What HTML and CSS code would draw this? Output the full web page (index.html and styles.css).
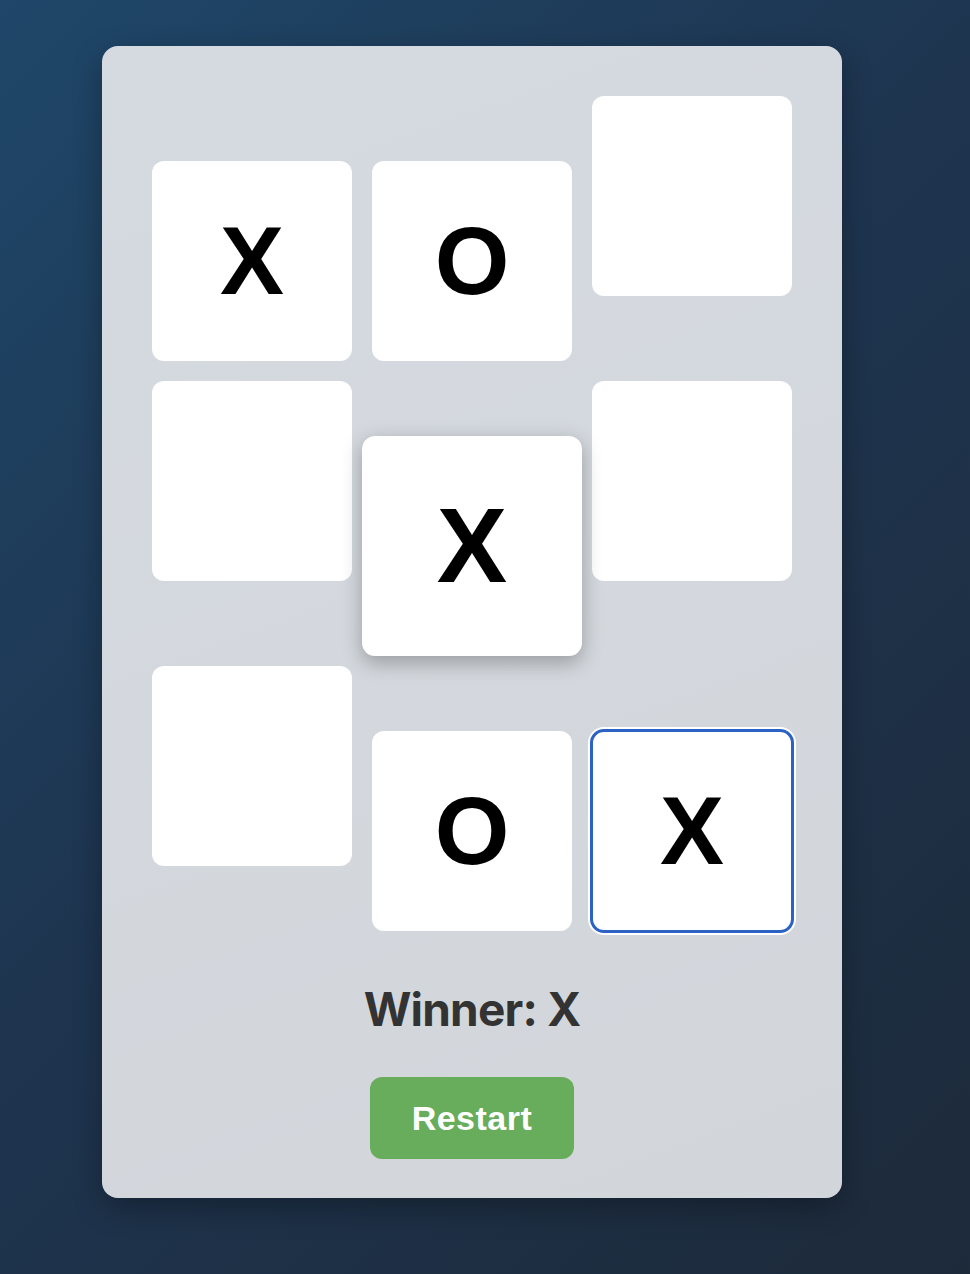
FILE: index.html
```html
<!DOCTYPE html>
<html lang="en">
<head>
<meta charset="utf-8">
<title>Tic Tac Toe</title>
<link rel="stylesheet" href="styles.css">
</head>
<body>
<main class="card">
  <div class="board">
    <div class="cell drop">X</div>
    <div class="cell drop">O</div>
    <div class="cell"></div>
    <div class="cell"></div>
    <div class="cell drop raised">X</div>
    <div class="cell"></div>
    <div class="cell"></div>
    <div class="cell drop">O</div>
    <div class="cell drop selected">X</div>
  </div>
  <h2 class="status">Winner: X</h2>
  <button class="restart">Restart</button>
</main>
</body>
</html>
```
FILE: styles.css
```css
html, body {
  margin: 0;
  height: 100%;
}
body {
  background: linear-gradient(135deg, #1f4769 0%, #1e3550 45%, #1d2a3a 100%);
  padding: 46px 0 0 102px;
  box-sizing: border-box;
  font-family: Inter, "Liberation Sans", sans-serif;
}
.card {
  width: 740px;
  box-sizing: border-box;
  padding: 50px 50px 39px;
  background: linear-gradient(160deg, #d5dae0 0%, #d2d6db 100%);
  border-radius: 16px;
  box-shadow: 0 10px 30px rgba(0, 0, 0, 0.3);
  display: flex;
  flex-direction: column;
  align-items: center;
}
.board {
  display: grid;
  grid-template-columns: repeat(3, 200px);
  column-gap: 20px;
  row-gap: 20px;
  align-items: start;
}
.cell {
  width: 200px;
  height: 200px;
  background: #fff;
  border-radius: 12px;
  display: flex;
  align-items: center;
  justify-content: center;
  font-family: "Liberation Sans", Arial, sans-serif;
  font-weight: 700;
  font-size: 96px;
  color: #000;
}
.drop {
  margin-top: 65px;
}
.raised {
  transform: scale(1.1);
  box-shadow: 0 6px 18px rgba(0, 0, 0, 0.28);
}
.selected {
  outline: 3px solid #2b62c4;
  outline-offset: -1px;
  box-shadow: 0 0 0 4px #fff;
}
.status {
  margin: 49px 0 0;
  font-family: Inter, "Liberation Sans", sans-serif;
  font-weight: 700;
  font-size: 46px;
  letter-spacing: -0.8px;
  line-height: 58px;
  color: #333;
}
.restart {
  margin-top: 39px;
  width: 204px;
  height: 82px;
  border: none;
  border-radius: 12px;
  background: #68ad5c;
  color: #fff;
  font-family: "Liberation Sans", Arial, sans-serif;
  font-weight: 700;
  font-size: 34px;
  letter-spacing: 0.5px;
  cursor: pointer;
}
```
